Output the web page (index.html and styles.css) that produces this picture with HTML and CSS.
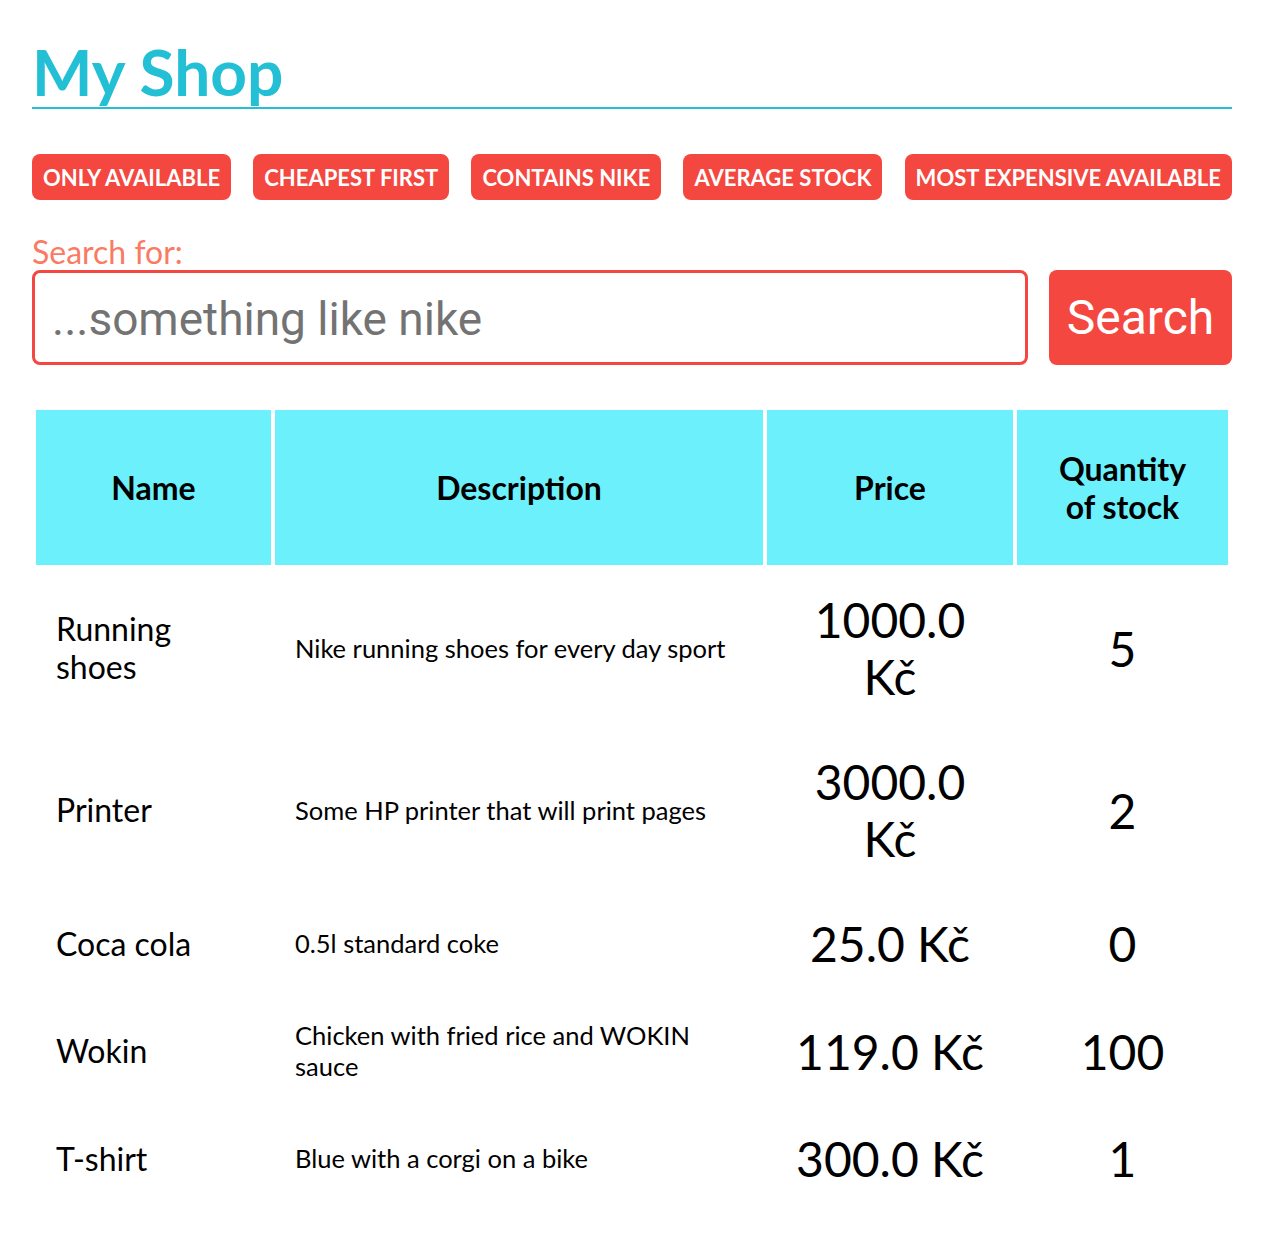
FILE: index.html
```html
<!DOCTYPE html>
<html lang="en">
<head>
<meta charset="utf-8">
<title>My Shop</title>
<link rel="stylesheet" href="styles.css">
</head>
<body>
<div class="page">
  <h1 class="title">My Shop</h1>
  <div class="filters">
    <button class="filter">ONLY AVAILABLE</button>
    <button class="filter">CHEAPEST FIRST</button>
    <button class="filter">CONTAINS NIKE</button>
    <button class="filter">AVERAGE STOCK</button>
    <button class="filter">MOST EXPENSIVE AVAILABLE</button>
  </div>
  <label class="search-label" for="q">Search for:</label>
  <div class="search-row">
    <input id="q" class="search-input" type="text" placeholder="...something like nike">
    <button class="search-btn">Search</button>
  </div>
  <table class="products">
    <thead>
      <tr>
        <th class="c-name">Name</th>
        <th class="c-desc">Description</th>
        <th class="c-price">Price</th>
        <th class="c-qty">Quantity<br>of stock</th>
      </tr>
    </thead>
    <tbody>
      <tr>
        <td class="name">Running shoes</td>
        <td class="desc">Nike running shoes for every day sport</td>
        <td class="price">1000.0 Kč</td>
        <td class="qty">5</td>
      </tr>
      <tr>
        <td class="name">Printer</td>
        <td class="desc">Some HP printer that will print pages</td>
        <td class="price">3000.0 Kč</td>
        <td class="qty">2</td>
      </tr>
      <tr>
        <td class="name">Coca cola</td>
        <td class="desc">0.5l standard coke</td>
        <td class="price">25.0 Kč</td>
        <td class="qty">0</td>
      </tr>
      <tr>
        <td class="name">Wokin</td>
        <td class="desc">Chicken with fried rice and WOKIN sauce</td>
        <td class="price">119.0 Kč</td>
        <td class="qty">100</td>
      </tr>
      <tr>
        <td class="name">T-shirt</td>
        <td class="desc">Blue with a corgi on a bike</td>
        <td class="price">300.0 Kč</td>
        <td class="qty">1</td>
      </tr>
    </tbody>
  </table>
</div>
</body>
</html>
```

FILE: styles.css
```css
* { box-sizing: border-box; }

html, body {
  margin: 0;
  background: #ffffff;
}

body {
  font-family: Lato, "Noto Sans", sans-serif;
  color: #000;
}

.page {
  width: 1200px;
  margin-left: 32px;
  padding-top: 40px;
}

.title {
  margin: 0;
  font-size: 64px;
  line-height: 64px;
  font-weight: 700;
  color: #22bfd5;
  padding-bottom: 3px;
  border-bottom: 2px solid #22bfd5;
}

.filters {
  display: flex;
  justify-content: space-between;
  margin-top: 45px;
}

.filter {
  height: 46px;
  padding: 0 11px;
  border: none;
  border-radius: 8px;
  background: #f44740;
  color: #fff;
  font-family: Lato, sans-serif;
  font-weight: 700;
  font-size: 22px;
  cursor: pointer;
}

.search-label {
  display: block;
  margin-top: 34px;
  font-size: 32px;
  line-height: 36px;
  color: #fb7a64;
}

.search-row {
  display: flex;
  gap: 21px;
}

.search-input {
  flex: 1;
  height: 95px;
  border: 3px solid #f44740;
  border-radius: 8px;
  padding: 2px 17px 0;
  font-family: Roboto, "Liberation Sans", sans-serif;
  font-size: 46px;
  color: #333;
  outline: none;
}

.search-input::placeholder {
  color: #737373;
}

.search-btn {
  width: 183px;
  height: 95px;
  border: none;
  border-radius: 8px;
  background: #f44740;
  color: #fff;
  font-family: Roboto, "Liberation Sans", sans-serif;
  font-size: 48px;
  cursor: pointer;
}

.products {
  margin-top: 41px;
  width: 1200px;
  border-spacing: 4px;
  table-layout: fixed;
}

.products th {
  background: #6cf0fc;
  height: 155px;
  font-size: 32px;
  line-height: 38px;
  font-weight: 700;
  text-align: center;
  vertical-align: middle;
  padding: 0 10px;
}

.c-name { width: 235px; }
.c-desc { width: 488px; }
.c-price { width: 246px; }
.c-qty { width: 211px; }

.products td {
  padding: 22px 20px;
  vertical-align: middle;
}

.name {
  font-size: 32px;
  line-height: 38px;
}

.desc {
  font-size: 25.5px;
  line-height: 31px;
}

.price, .qty {
  font-size: 48px;
  line-height: 57px;
  text-align: center;
}
```
